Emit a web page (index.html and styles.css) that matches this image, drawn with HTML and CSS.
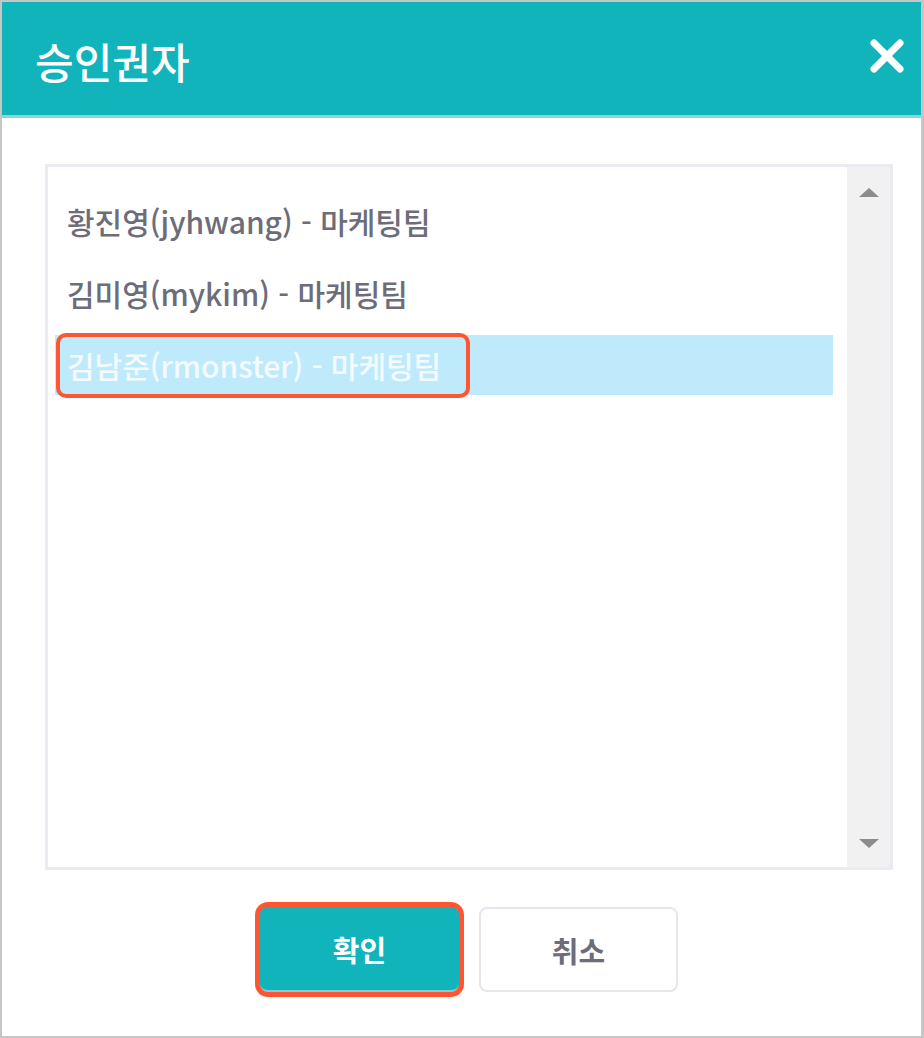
FILE: index.html
```html
<!DOCTYPE html>
<html lang="ko">
<head>
    <meta charset="UTF-8">
    <meta name="viewport" content="width=device-width, initial-scale=1.0">
    <title>승인권자</title>
    <link rel="stylesheet" href="styles.css">
</head>
<body>
    <div class="dialog">
        <div class="dialog-header">
            <h1 class="dialog-title">승인권자</h1>
            <button class="close-btn" aria-label="닫기">
                <svg width="36" height="36" viewBox="0 0 36 36">
                    <path d="M5 4 L31 30 M31 4 L5 30" stroke="#fff" stroke-width="7" stroke-linecap="round" fill="none"/>
                </svg>
            </button>
        </div>

        <div class="dialog-body">
            <div class="list-box">
                <ul class="user-list">
                    <li class="user-item">황진영(jyhwang) - 마케팅팀</li>
                    <li class="user-item">김미영(mykim) - 마케팅팀</li>
                    <li class="user-item selected">김남준(rmonster) - 마케팅팀<span class="mark"></span></li>
                </ul>
                <div class="scrollbar">
                    <span class="arrow-up"></span>
                    <span class="arrow-down"></span>
                </div>
            </div>

            <div class="btn-row">
                <button class="btn btn-ok">확인</button>
                <button class="btn btn-cancel">취소</button>
            </div>
        </div>
    </div>
</body>
</html>
```

FILE: styles.css
```css
* {
    box-sizing: border-box;
}
body {
    margin: 0;
    font-family: 'Noto Sans CJK KR', 'Noto Sans', sans-serif;
    background: #fff;
}
.dialog {
    width: 924px;
    height: 1038px;
    border: 2px solid #c6c6c6;
    border-right-width: 3px;
    background: #fff;
}
.dialog-header {
    height: 116px;
    background: #12b4bc;
    border-bottom: 3px solid #86d7da;
    display: flex;
    align-items: center;
    justify-content: space-between;
    padding: 0 14px 0 33px;
}
.dialog-title {
    margin: 0;
    color: #fff;
    font-size: 42px;
    font-weight: 500;
    line-height: 1;
    padding-top: 4px;
}
.close-btn {
    background: none;
    border: none;
    padding: 0;
    width: 40px;
    height: 40px;
    display: flex;
    align-items: center;
    justify-content: center;
    margin-top: -4px;
    cursor: pointer;
}
.dialog-body {
    padding: 46px 28px 0 43px;
}
.list-box {
    height: 706px;
    border: 3px solid #eaeaf0;
    display: flex;
}
.user-list {
    flex: 1;
    list-style: none;
    margin: 0;
    padding: 24px 14px 0 7px;
    display: flex;
    flex-direction: column;
    gap: 12px;
}
.user-item {
    position: relative;
    height: 60px;
    padding-left: 12px;
    display: flex;
    align-items: center;
    font-size: 30px;
    font-weight: 500;
    color: #6d6d79;
}
.user-item.selected {
    background: #bfeafc;
    color: #f4fbff;
}
.mark {
    position: absolute;
    left: 1px;
    top: -2px;
    width: 414px;
    height: 65px;
    border: 4px solid #ff5533;
    border-radius: 10px;
}
.scrollbar {
    width: 43px;
    background: #f1f1f1;
    display: flex;
    flex-direction: column;
    justify-content: space-between;
    align-items: center;
    padding: 21px 0 19px;
}
.arrow-up {
    width: 0;
    height: 0;
    border-left: 10px solid transparent;
    border-right: 10px solid transparent;
    border-bottom: 9px solid #8c8c8c;
}
.arrow-down {
    width: 0;
    height: 0;
    border-left: 10px solid transparent;
    border-right: 10px solid transparent;
    border-top: 9px solid #8c8c8c;
}
.btn-row {
    display: flex;
    justify-content: center;
    align-items: center;
    gap: 20px;
    margin-top: 37px;
}
.btn {
    width: 199px;
    height: 85px;
    border-radius: 8px;
    font-family: inherit;
    font-size: 29px;
    font-weight: bold;
    cursor: pointer;
}
.btn-ok {
    background: #12b4bc;
    color: #fff;
    border: none;
    border-bottom: 2px solid #7ccfd3;
    box-shadow: 0 0 0 5px #ff5533;
}
.btn-cancel {
    background: #fff;
    color: #6d6d79;
    border: 2px solid #e6e6ee;
}
```
